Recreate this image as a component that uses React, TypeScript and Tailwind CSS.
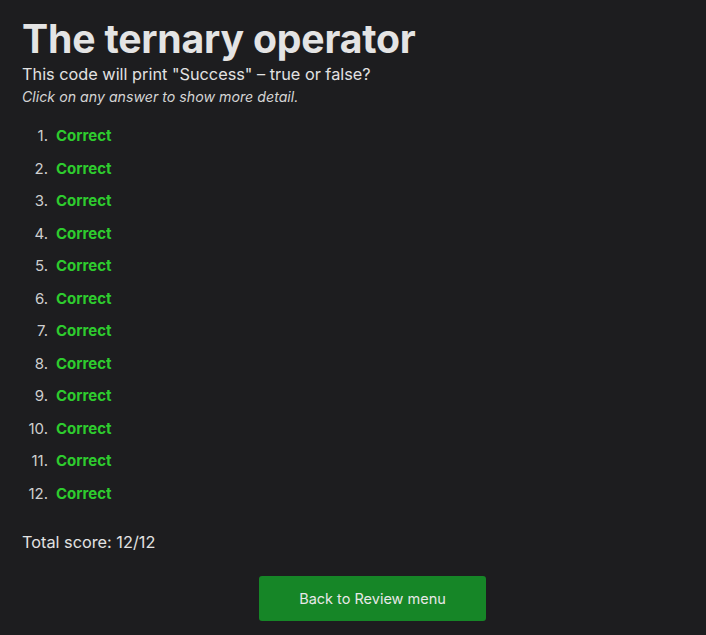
export default function App() {
  const answers = Array.from({ length: 12 }, (_, i) => i + 1);

  return (
    <div
      className="min-h-[635px] w-full bg-[#1d1d1f] px-[22px] pt-[14px] text-[#e2e2e2]"
      style={{ fontFamily: 'Inter, "Noto Sans", sans-serif' }}
    >
      <h1 className="text-[39.2px] font-bold leading-[50px] tracking-[-0.2px] text-[#e4e4e4]">The ternary operator</h1>
      <p className="text-[16.3px] leading-[20px]">This code will print "Success" – true or false?</p>
      <p className="mt-[3px] text-[14.2px] italic leading-[20px] text-[#d4d4d4]">Click on any answer to show more detail.</p>

      <ol className="mt-[19px] flex flex-col">
        {answers.map((n) => (
          <li key={n} className="flex h-[32.5px] items-start text-[15px] leading-[20px]">
            <span className="w-[26px] text-right text-[#cfcfcf]">{n}.</span>
            <span className="ml-[8px] font-bold text-[#2ecc2e]">Correct</span>
          </li>
        ))}
      </ol>

      <p className="mt-[16px] text-[16.3px] leading-[20px]">Total score: 12/12</p>

      <div className="mt-[24px] flex justify-center pl-[39px]">
        <button className="h-[45px] w-[227px] rounded-[3px] bg-[#168627] text-[14.5px] text-[#e8e8e8]">
          Back to Review menu
        </button>
      </div>
    </div>
  );
}
